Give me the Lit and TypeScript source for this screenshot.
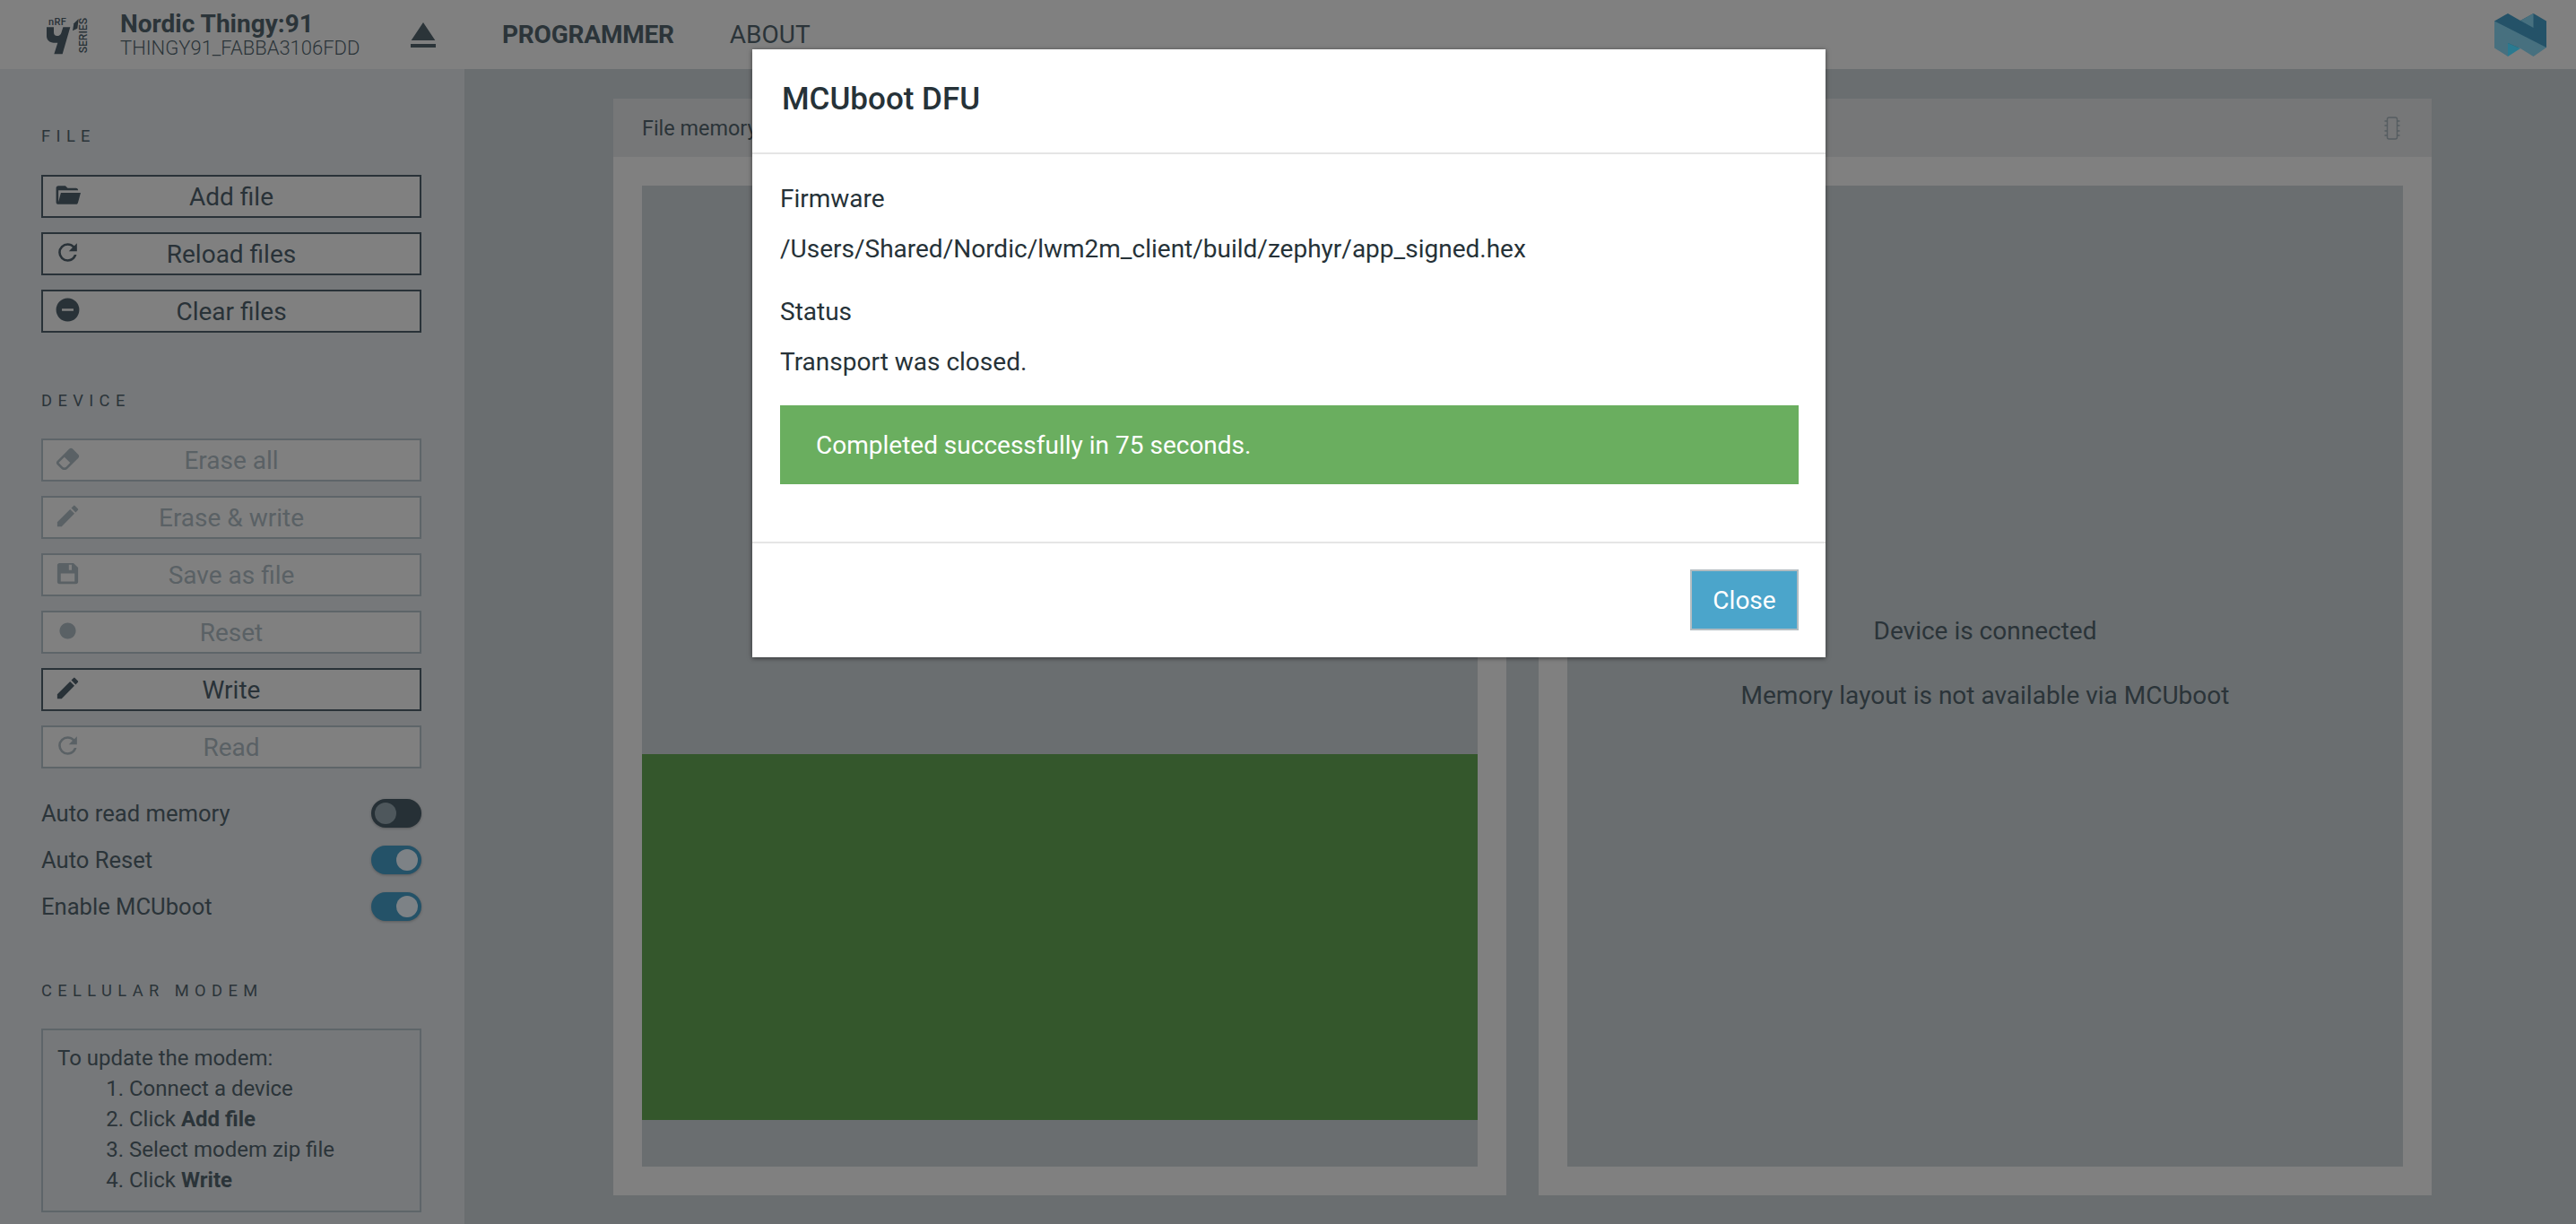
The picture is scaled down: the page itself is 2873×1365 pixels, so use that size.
import { LitElement, html, css, svg } from 'lit';
import { customElement } from 'lit/decorators.js';
import { classMap } from 'lit/directives/class-map.js';

const ICONS = {
  folder: 'M6.1,10L4,18V8H21A2,2 0 0,0 19,6H12L10,4H4A2,2 0 0,0 2,6V18A2,2 0 0,0 4,20H19C19.9,20 20.7,19.4 20.9,18.5L23.2,10H6.1Z',
  refresh: 'M17.65,6.35C16.2,4.9 14.21,4 12,4A8,8 0 0,0 4,12A8,8 0 0,0 12,20C15.73,20 18.84,17.45 19.73,14H17.65C16.83,16.33 14.61,18 12,18A6,6 0 0,1 6,12A6,6 0 0,1 12,6C13.66,6 15.14,6.69 16.22,7.78L13,11H20V4L17.65,6.35Z',
  minus: 'M17,13H7V11H17M12,2A10,10 0 0,0 2,12A10,10 0 0,0 12,22A10,10 0 0,0 22,12A10,10 0 0,0 12,2Z',
  eraser: 'M16.24,3.56L21.19,8.5C21.97,9.29 21.97,10.55 21.19,11.34L12,20.53C10.44,22.09 7.91,22.09 6.34,20.53L2.81,17C2.03,16.21 2.03,14.95 2.81,14.16L13.41,3.56C14.2,2.78 15.46,2.78 16.24,3.56M4.22,15.58L7.76,19.11C8.54,19.9 9.8,19.9 10.59,19.11L14.12,15.58L9.17,10.63L4.22,15.58Z',
  pencil: 'M20.71,7.04C21.1,6.65 21.1,6 20.71,5.63L18.37,3.29C18,2.9 17.35,2.9 16.96,3.29L15.12,5.12L18.87,8.87M3,17.25V21H6.75L17.81,9.93L14.06,6.18L3,17.25Z',
  save: 'M5,3H17L21,7V19A2,2 0 0,1 19,21H5A2,2 0 0,1 3,19V5A2,2 0 0,1 5,3M13,4.5V9H15.5V4.5H13M6,12V19H18V12H6Z',
  record: 'M19,12C19,15.86 15.86,19 12,19C8.14,19 5,15.86 5,12C5,8.14 8.14,5 12,5C15.86,5 19,8.14 19,12Z',
  eject: 'M12,5L5.33,15H18.67L12,5M5,17H19V19H5V17Z',
};

const icon = (name: keyof typeof ICONS) =>
  svg`<svg viewBox="0 0 24 24" fill="currentColor" fill-rule="evenodd"><path d=${ICONS[name]}></path></svg>`;

@customElement('side-button')
export class SideButton extends LitElement {
  static properties = {
    label: { type: String },
    icon: { type: String },
    disabled: { type: Boolean },
  };
  label = '';
  icon: keyof typeof ICONS = 'pencil';
  disabled = false;

  static styles = css`
    :host {
      display: block;
    }
    .btn {
      display: grid;
      grid-template-columns: 54px 1fr 54px;
      align-items: center;
      height: 48px;
      box-sizing: border-box;
      border: 2px solid #293238;
      color: #293238;
      background: #808080;
      font-size: 28px;
    }
    .btn.off {
      border-color: #5e6569;
      color: #5a6165;
    }
    .icon {
      display: flex;
      justify-content: center;
      margin-top: -3px;
    }
    .icon svg {
      width: 31px;
      height: 31px;
    }
    .text {
      text-align: center;
    }
  `;

  render() {
    return html`
      <div class=${classMap({ btn: true, off: this.disabled })}>
        <span class="icon">${icon(this.icon)}</span>
        <span class="text">${this.label}</span>
      </div>
    `;
  }
}

@customElement('side-toggle')
export class SideToggle extends LitElement {
  static properties = {
    label: { type: String },
    on: { type: Boolean },
  };
  label = '';
  on = false;

  static styles = css`
    :host {
      display: flex;
      align-items: center;
      justify-content: space-between;
      height: 52px;
      font-size: 25.6px;
      color: #2b3439;
    }
    .track {
      display: flex;
      align-items: center;
      justify-content: flex-start;
      width: 56px;
      height: 32px;
      padding: 0 4px;
      box-sizing: border-box;
      border-radius: 16px;
      background: #263036;
      box-shadow: 0 1px 3px rgba(0, 0, 0, 0.25);
    }
    .track.on {
      justify-content: flex-end;
      background: #245268;
    }
    .knob {
      width: 24px;
      height: 24px;
      border-radius: 50%;
      background: #4e575c;
    }
    .track.on .knob {
      background: #7d8286;
    }
  `;

  render() {
    return html`
      <span>${this.label}</span>
      <span class=${classMap({ track: true, on: this.on })}><span class="knob"></span></span>
    `;
  }
}

@customElement('app-root')
export class AppRoot extends LitElement {
  static styles = css`
    :host {
      display: flex;
      flex-direction: column;
      position: relative;
      height: 1365px;
      overflow: hidden;
      font-family: Roboto, 'Liberation Sans', sans-serif;
      color: #2b3439;
      background: #6a6e70;
    }

    /* top bar */
    .topbar {
      display: flex;
      align-items: center;
      flex: none;
      height: 77px;
      background: #808080;
    }
    .brand {
      flex: none;
      width: 60px;
      height: 52px;
      margin-left: 45px;
    }
    .device {
      display: flex;
      flex-direction: column;
      width: 314px;
      margin-left: 29px;
    }
    .device-name {
      font-size: 28px;
      font-weight: 700;
      line-height: 30px;
    }
    .device-serial {
      font-size: 22px;
      font-weight: 300;
      line-height: 24px;
    }
    .eject {
      flex: none;
      width: 48px;
      height: 48px;
    }
    .nav {
      display: flex;
      gap: 62px;
      margin-left: 64px;
      font-size: 28px;
    }
    .nav .active {
      font-weight: 700;
      letter-spacing: -0.2px;
    }
    .nordic {
      flex: none;
      width: 58px;
      height: 48px;
      margin-left: auto;
      margin-right: 33px;
    }

    .content {
      display: flex;
      flex: 1;
      min-height: 0;
    }

    /* left column */
    .sidebar {
      flex: none;
      box-sizing: border-box;
      width: 518px;
      padding: 63px 48px 0 46px;
      background: #76787a;
    }
    .section-label {
      height: 24px;
      font-size: 18.3px;
      line-height: 24px;
      letter-spacing: 6.4px;
      white-space: nowrap;
    }
    .buttons {
      display: flex;
      flex-direction: column;
      gap: 16px;
      margin-top: 31px;
    }
    .section-label.device-label {
      margin-top: 64px;
    }
    .buttons.device-buttons {
      margin-top: 30px;
    }
    .toggles {
      margin-top: 24px;
    }
    .section-label.modem-label {
      margin-top: 56px;
    }
    .howto {
      box-sizing: border-box;
      height: 205px;
      margin-top: 30px;
      padding: 14px 16px;
      border: 2px solid #5e6569;
      font-size: 24px;
      line-height: 34px;
    }
    .howto ol {
      margin: 0;
      padding-left: 80px;
    }

    /* memory panels */
    .main {
      display: flex;
      flex: 1;
      gap: 36px;
      min-width: 0;
      padding: 33px 161px 32px 166px;
    }
    .panel {
      display: flex;
      flex: 1;
      flex-direction: column;
      min-width: 0;
      background: #808080;
    }
    .panel-title {
      display: flex;
      align-items: center;
      justify-content: space-between;
      flex: none;
      height: 65px;
      padding: 0 32px;
      background: #767778;
      font-size: 23.4px;
    }
    .panel-body {
      flex: 1;
      margin: 32px;
      background: #6a6e70;
    }
    .region {
      height: 408px;
      margin-top: 634px;
      background: #34572c;
    }
    .chip {
      width: 18px;
      height: 26px;
      margin-right: 3px;
      color: #565d61;
    }
    .panel-body.empty {
      padding-top: 479px;
      text-align: center;
      font-size: 28px;
      line-height: 36px;
    }
    .panel-body.empty p {
      margin: 0 0 36px;
    }

    /* dialog */
    .modal {
      position: absolute;
      top: 55px;
      left: 839px;
      display: flex;
      flex-direction: column;
      box-sizing: border-box;
      width: 1197px;
      height: 678px;
      background: #fff;
      box-shadow: 0 1px 5px rgba(0, 0, 0, 0.55);
      color: #263238;
    }
    .modal-head {
      flex: none;
      box-sizing: border-box;
      height: 117px;
      padding: 0 33px;
      border-bottom: 2px solid #e5e5e5;
      font-size: 35px;
      font-weight: 500;
      line-height: 112px;
    }
    .modal-body {
      flex: 1;
      padding: 32px 30px 0 31px;
      font-size: 28px;
      line-height: 36px;
    }
    .modal-body p {
      margin: 0 0 20px;
    }
    .modal-body p.path {
      margin-bottom: 34px;
    }
    .alert {
      height: 88px;
      margin-top: 30px;
      padding: 0 40px;
      background: #6aae5f;
      color: #fff;
      line-height: 90px;
    }
    .modal-foot {
      display: flex;
      justify-content: flex-end;
      flex: none;
      box-sizing: border-box;
      height: 129px;
      padding: 29px 30px 0 0;
      border-top: 2px solid #e5e5e5;
    }
    .close {
      box-sizing: border-box;
      width: 121px;
      height: 68px;
      border: 2px solid #b3bcc1;
      background: #4ba5cb;
      color: #fff;
      font-family: inherit;
      font-size: 28px;
    }
  `;

  render() {
    return html`
      <div class="topbar">
        <svg class="brand" viewBox="0 0 180 156" fill="#293238">
          <text x="27" y="45" font-size="33" font-weight="500" letter-spacing="1">nRF</text>
          <path d="M21 52V82C21 95 31 104 45 104H58L46 142H74L100 52H76L70 71C68 78 62 81 56 81C49 81 45 77 45 69V52Z"></path>
          <path d="M108 64L112 40L128 24L124 56Z"></path>
          <text transform="translate(156 139) rotate(-90)" font-size="36" font-weight="500" textLength="118" lengthAdjust="spacingAndGlyphs">SERIES</text>
        </svg>
        <div class="device">
          <span class="device-name">Nordic Thingy:91</span>
          <span class="device-serial">THINGY91_FABBA3106FDD</span>
        </div>
        <span class="eject">${icon('eject')}</span>
        <div class="nav">
          <span class="active">PROGRAMMER</span>
          <span>ABOUT</span>
        </div>
        <svg class="nordic" viewBox="0 0 58 48">
          <path fill="#245268" d="M0 8.5L15 0L29 8L43.5 0L58 8.5V38H0Z"></path>
          <path fill="#47707f" d="M29 8L43.5 0V16Z"></path>
          <path fill="#47707f" d="M0 8.5L58 38L43.5 48L29 39L15 33V48L0 38.5Z"></path>
          <path fill="#2a7a90" d="M15 33L29 39L15 48Z"></path>
        </svg>
      </div>

      <div class="content">
        <aside class="sidebar">
          <div class="section-label">FILE</div>
          <div class="buttons">
            <side-button label="Add file" icon="folder"></side-button>
            <side-button label="Reload files" icon="refresh"></side-button>
            <side-button label="Clear files" icon="minus"></side-button>
          </div>

          <div class="section-label device-label">DEVICE</div>
          <div class="buttons device-buttons">
            <side-button label="Erase all" icon="eraser" disabled></side-button>
            <side-button label="Erase &amp; write" icon="pencil" disabled></side-button>
            <side-button label="Save as file" icon="save" disabled></side-button>
            <side-button label="Reset" icon="record" disabled></side-button>
            <side-button label="Write" icon="pencil"></side-button>
            <side-button label="Read" icon="refresh" disabled></side-button>
          </div>
          <div class="toggles">
            <side-toggle label="Auto read memory"></side-toggle>
            <side-toggle label="Auto Reset" on></side-toggle>
            <side-toggle label="Enable MCUboot" on></side-toggle>
          </div>

          <div class="section-label modem-label">CELLULAR MODEM</div>
          <div class="howto">
            To update the modem:
            <ol>
              <li>Connect a device</li>
              <li>Click <b>Add file</b></li>
              <li>Select modem zip file</li>
              <li>Click <b>Write</b></li>
            </ol>
          </div>
        </aside>

        <main class="main">
          <section class="panel">
            <div class="panel-title">File memory layout</div>
            <div class="panel-body"><div class="region"></div></div>
          </section>
          <section class="panel">
            <div class="panel-title">
              <span>Device memory layout</span>
              <svg class="chip" viewBox="0 0 18 26" fill="none" stroke="currentColor" stroke-width="1.4">
                <rect x="3.5" y="1" width="11" height="24" rx="2"></rect>
                <path d="M0.5 5H3.5M0.5 10H3.5M0.5 16H3.5M0.5 21H3.5M14.5 5H17.5M14.5 10H17.5M14.5 16H17.5M14.5 21H17.5"></path>
              </svg>
            </div>
            <div class="panel-body empty">
              <p>Device is connected</p>
              <p>Memory layout is not available via MCUboot</p>
            </div>
          </section>
        </main>
      </div>

      <div class="modal">
        <div class="modal-head">MCUboot DFU</div>
        <div class="modal-body">
          <p>Firmware</p>
          <p class="path">/Users/Shared/Nordic/lwm2m_client/build/zephyr/app_signed.hex</p>
          <p>Status</p>
          <p>Transport was closed.</p>
          <div class="alert">Completed successfully in 75 seconds.</div>
        </div>
        <div class="modal-foot">
          <button class="close">Close</button>
        </div>
      </div>
    `;
  }
}
